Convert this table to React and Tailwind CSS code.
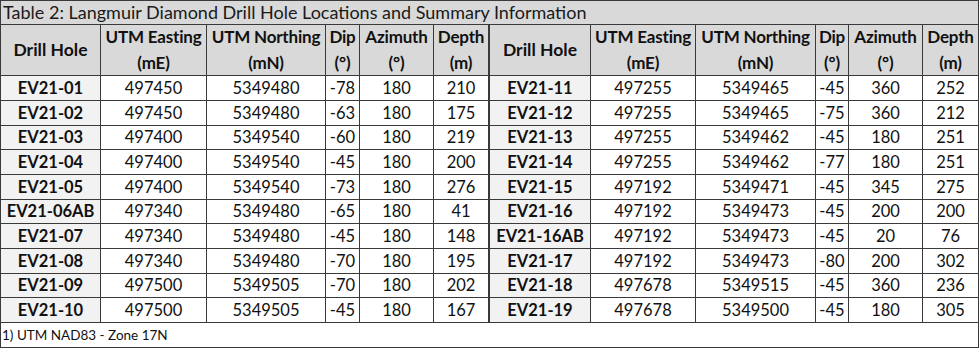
import React from 'react';

const left = [
  ['EV21-01', '497450', '5349480', '-78', '180', '210'],
  ['EV21-02', '497450', '5349480', '-63', '180', '175'],
  ['EV21-03', '497400', '5349540', '-60', '180', '219'],
  ['EV21-04', '497400', '5349540', '-45', '180', '200'],
  ['EV21-05', '497400', '5349540', '-73', '180', '276'],
  ['EV21-06AB', '497340', '5349480', '-65', '180', '41'],
  ['EV21-07', '497340', '5349480', '-45', '180', '148'],
  ['EV21-08', '497340', '5349480', '-70', '180', '195'],
  ['EV21-09', '497500', '5349505', '-70', '180', '202'],
  ['EV21-10', '497500', '5349505', '-45', '180', '167'],
];

const right = [
  ['EV21-11', '497255', '5349465', '-45', '360', '252'],
  ['EV21-12', '497255', '5349465', '-75', '360', '212'],
  ['EV21-13', '497255', '5349462', '-45', '180', '251'],
  ['EV21-14', '497255', '5349462', '-77', '180', '251'],
  ['EV21-15', '497192', '5349471', '-45', '345', '275'],
  ['EV21-16', '497192', '5349473', '-45', '200', '200'],
  ['EV21-16AB', '497192', '5349473', '-45', '20', '76'],
  ['EV21-17', '497192', '5349473', '-80', '200', '302'],
  ['EV21-18', '497678', '5349515', '-45', '360', '236'],
  ['EV21-19', '497678', '5349500', '-45', '180', '305'],
];

const headers = [
  ['UTM Easting', '(mE)'],
  ['UTM Northing', '(mN)'],
  ['Dip', '(°)'],
  ['Azimuth', '(°)'],
  ['Depth', '(m)'],
];

function HeaderCells({ divider }) {
  return (
    <>
      <div
        className={
          'bg-[#d9d9d9] flex items-center justify-center font-bold text-[17.5px] ' +
          (divider ? 'border-l border-[#3a3a3a]' : '')
        }
      >
        Drill Hole
      </div>
      {headers.map(([a, b]) => (
        <div
          key={a}
          className="bg-[#d9d9d9] flex flex-col items-center justify-center font-bold text-[17px] leading-[26px] tracking-[-0.2px] whitespace-nowrap"
        >
          <span>{a}</span>
          <span>{b}</span>
        </div>
      ))}
    </>
  );
}

function RowCells({ row, divider }) {
  const [hole, ...rest] = row;
  return (
    <>
      <div
        className={
          'bg-[#f2f2f2] flex items-center justify-center font-bold ' +
          (divider ? 'border-l border-[#3a3a3a]' : '')
        }
      >
        {hole}
      </div>
      {rest.map((v, i) => (
        <div key={i} className="bg-white flex items-center justify-center">
          {v}
        </div>
      ))}
    </>
  );
}

export default function App() {
  return (
    <div className="w-[980px] h-[348px] bg-white font-['Lato',sans-serif] text-[16.5px] text-[#111]">
      <div className="w-[979px] grid grid-cols-[99px_105px_118px_33px_73px_54px_101px_104px_119px_32px_73px_55px] grid-rows-[23px_50px_24px_24px_23px_24px_24px_23px_24px_24px_23px_24px_24px] gap-px bg-[#3a3a3a] p-px">
        <div className="col-span-full bg-[#d9d9d9] pl-[2px] flex items-center text-[18px] text-[#1a1a1a] whitespace-nowrap">
          Table 2: Langmuir Diamond Drill Hole Locations and Summary Information
        </div>
        <HeaderCells />
        <HeaderCells divider />
        {left.map((row, i) => (
          <React.Fragment key={row[0]}>
            <RowCells row={row} />
            <RowCells row={right[i]} divider />
          </React.Fragment>
        ))}
        <div className="col-span-full bg-white flex items-center pl-[1px] text-[13.5px]">
          1) UTM NAD83 - Zone 17N
        </div>
      </div>
    </div>
  );
}
